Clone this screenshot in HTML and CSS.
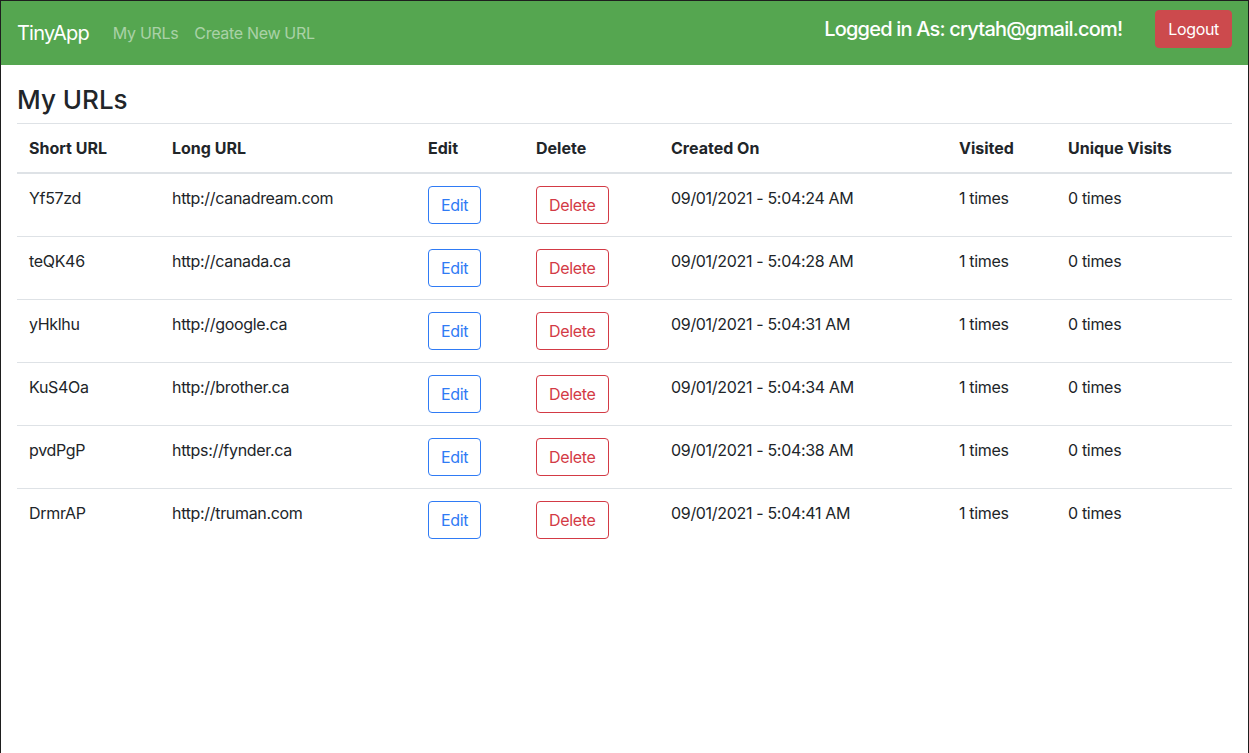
FILE: index.html
```html
<!DOCTYPE html>
<html lang="en">
<head>
<meta charset="utf-8">
<title>TinyApp</title>
<link rel="stylesheet" href="styles.css">
</head>
<body>
<nav class="navbar">
  <div class="nav-left">
    <a class="brand" href="#">TinyApp</a>
    <a class="nav-link" href="#">My URLs</a>
    <a class="nav-link" href="#">Create New URL</a>
  </div>
  <div class="nav-right">
    <span class="user">Logged in As: crytah@gmail.com!</span>
    <button class="btn btn-danger">Logout</button>
  </div>
</nav>
<main class="content">
  <h4 class="title">My URLs</h4>
  <table class="table">
    <thead>
      <tr>
        <th class="c1">Short URL</th>
        <th class="c2">Long URL</th>
        <th class="c3">Edit</th>
        <th class="c4">Delete</th>
        <th class="c5">Created On</th>
        <th class="c6">Visited</th>
        <th class="c7">Unique Visits</th>
      </tr>
    </thead>
    <tbody>
      <tr>
        <td>Yf57zd</td><td>http://canadream.com</td>
        <td><button class="btn btn-outline-primary">Edit</button></td>
        <td><button class="btn btn-outline-danger">Delete</button></td>
        <td>09/01/2021 - 5:04:24 AM</td><td>1 times</td><td>0 times</td>
      </tr>
      <tr>
        <td>teQK46</td><td>http://canada.ca</td>
        <td><button class="btn btn-outline-primary">Edit</button></td>
        <td><button class="btn btn-outline-danger">Delete</button></td>
        <td>09/01/2021 - 5:04:28 AM</td><td>1 times</td><td>0 times</td>
      </tr>
      <tr>
        <td>yHklhu</td><td>http://google.ca</td>
        <td><button class="btn btn-outline-primary">Edit</button></td>
        <td><button class="btn btn-outline-danger">Delete</button></td>
        <td>09/01/2021 - 5:04:31 AM</td><td>1 times</td><td>0 times</td>
      </tr>
      <tr>
        <td>KuS4Oa</td><td>http://brother.ca</td>
        <td><button class="btn btn-outline-primary">Edit</button></td>
        <td><button class="btn btn-outline-danger">Delete</button></td>
        <td>09/01/2021 - 5:04:34 AM</td><td>1 times</td><td>0 times</td>
      </tr>
      <tr>
        <td>pvdPgP</td><td>https://fynder.ca</td>
        <td><button class="btn btn-outline-primary">Edit</button></td>
        <td><button class="btn btn-outline-danger">Delete</button></td>
        <td>09/01/2021 - 5:04:38 AM</td><td>1 times</td><td>0 times</td>
      </tr>
      <tr>
        <td>DrmrAP</td><td>http://truman.com</td>
        <td><button class="btn btn-outline-primary">Edit</button></td>
        <td><button class="btn btn-outline-danger">Delete</button></td>
        <td>09/01/2021 - 5:04:41 AM</td><td>1 times</td><td>0 times</td>
      </tr>
    </tbody>
  </table>
</main>
</body>
</html>
```

FILE: styles.css
```css
* { box-sizing: border-box; }
html, body { margin: 0; padding: 0; }
body {
  height: 100vh;
  border: 1px solid #1e1e1e;
  border-bottom: none;
  font-family: Inter, "Noto Sans", "Liberation Sans", sans-serif;
  font-size: 16px;
  line-height: 1.5;
  letter-spacing: -0.02em;
  color: #212529;
  background: #fff;
}
.navbar {
  height: 64px;
  background: #55a650;
  display: flex;
  justify-content: space-between;
  align-items: center;
  padding: 0 16px;
}
.nav-left { display: flex; align-items: center; }
.brand {
  color: #fff;
  font-size: 20px;
  line-height: 30px;
  letter-spacing: -0.04em;
  text-decoration: none;
  margin-right: 16px;
}
.nav-link {
  color: rgba(255,255,255,0.5);
  text-decoration: none;
  padding: 8px;
}
.nav-right {
  align-self: flex-start;
  margin-top: 9px;
  display: flex;
  align-items: center;
}
.user {
  color: #fff;
  font-size: 20px;
  font-weight: 500;
  letter-spacing: -0.04em;
  margin-right: 33px;
}
.btn {
  font-family: inherit;
  font-size: 16px;
  line-height: 24px;
  letter-spacing: -0.02em;
  padding: 6px 12px;
  border-radius: 4px;
  border: 1px solid transparent;
  background: transparent;
  cursor: pointer;
}
.btn-danger { background: #cc4a4d; border-color: #cc4a4d; color: #fff; }
.btn-outline-primary { color: #2f7bf5; border-color: #2f7bf5; }
.btn-outline-danger { color: #d33a45; border-color: #d33a45; }
.content { padding: 0 16px; }
.title {
  margin: 20px 0 9px;
  font-size: 26px;
  font-weight: 500;
  line-height: 29px;
  letter-spacing: 0;
}
.table {
  width: 100%;
  border-collapse: collapse;
  table-layout: fixed;
}
.table th, .table td {
  padding: 12px;
  text-align: left;
  vertical-align: top;
  border-top: 1px solid #dee2e6;
}
.table thead th {
  font-weight: 700;
  letter-spacing: 0;
  vertical-align: bottom;
  border-bottom: 2px solid #dee2e6;
}
.c1 { width: 143px; }
.c2 { width: 256px; }
.c3 { width: 108px; }
.c4 { width: 135px; }
.c5 { width: 288px; }
.c6 { width: 109px; }
.c7 { width: 176px; }
```
